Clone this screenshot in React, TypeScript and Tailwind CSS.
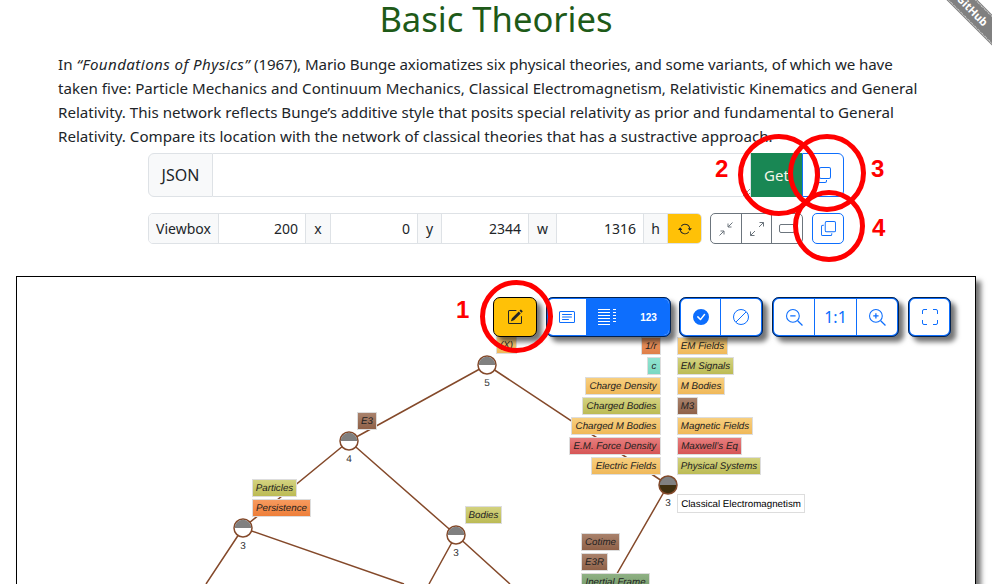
import React from "react";

const tagBg: Record<string, string> = {
  y: "bg-[linear-gradient(#d3d27f,#bcbb55)]",
  o: "bg-[linear-gradient(#f8cf7f,#f0b859)]",
  b: "bg-[linear-gradient(#a9826c,#8f6148)]",
  r: "bg-[linear-gradient(#e77e7e,#d65656)]",
  d: "bg-[linear-gradient(#f79a5e,#ee7f3a)]",
  t: "bg-[linear-gradient(#90e3d0,#7bd8c2)]",
  c: "bg-[linear-gradient(#ee9a66,#df7f48)]",
  g: "bg-[linear-gradient(#8fb184,#739a68)]",
};

const tags: [string, number, number, number, string][] = [
  ["(X)", 496, 336, 21, "o"],
  ["1/r", 641, 337, 20, "c"],
  ["c", 647, 357, 14, "t"],
  ["EM Fields", 677, 337, 51, "o"],
  ["EM Signals", 677, 357, 57, "y"],
  ["Charge Density", 585, 377, 76, "o"],
  ["M Bodies", 677, 377, 48, "o"],
  ["Charged Bodies", 582, 397, 79, "y"],
  ["M3", 677, 397, 21, "b"],
  ["Charged M Bodies", 571, 417, 90, "o"],
  ["Magnetic Fields", 677, 417, 76, "o"],
  ["E.M. Force Density", 569, 437, 92, "r"],
  ["Maxwell’s Eq", 677, 437, 65, "r"],
  ["Electric Fields", 591, 457, 70, "o"],
  ["Physical Systems", 677, 457, 84, "y"],
  ["Cotime", 581, 533, 39, "b"],
  ["E3R", 581, 553, 27, "b"],
  ["Inertial Frame", 581, 573, 69, "g"],
  ["E3", 357, 412, 20, "b"],
  ["Particles", 252, 479, 45, "y"],
  ["Persistence", 252, 499, 59, "d"],
  ["Bodies", 465, 506, 37, "y"],
];

const Node = ({ cx, cy, n, dark }: { cx: number; cy: number; n?: string; dark?: boolean }) => (
  <g>
    <circle cx={cx} cy={cy} r="9" fill={dark ? "#3f2f0f" : "#fff"} stroke="#84492a" strokeWidth="1.5" />
    <path d={`M${cx - 8.3} ${cy}A8.3 8.3 0 0 1 ${cx + 8.3} ${cy}Z`} fill="#808080" />
    {n && (
      <text x={cx} y={cy + 21} textAnchor="middle" fontSize="10" fill="#333" fontFamily="Liberation Sans, sans-serif" textRendering="geometricPrecision">
        {n}
      </text>
    )}
  </g>
);

const Graph = () => (
  <svg className="absolute left-0 top-0" width="992" height="584" viewBox="0 0 992 584">
    <g stroke="#84492a" strokeWidth="1.5" fill="none">
      <path d="M487 365 349 441M349 441 243 528M349 441 456 535M487 365 668 485M668 485 611 584M243 528 206 584M243 528 404 584M456 535 429 584M456 535 510 584" />
    </g>
    <Node cx={487} cy={365} n="5" />
    <Node cx={349} cy={441} n="4" />
    <Node cx={243} cy={528} n="3" />
    <Node cx={456} cy={535} n="3" />
    <Node cx={668} cy={485} n="3" dark />
  </svg>
);

const Ring = ({ x, y, size }: { x: number; y: number; size: number }) => (
  <div
    className="absolute rounded-full border-[5px] border-[#ff0000] z-30 pointer-events-none"
    style={{ left: x, top: y, width: size, height: size }}
  />
);

const Num = ({ x, y, t }: { x: number; y: number; t: string }) => (
  <div
    className="absolute z-30 text-[24px] leading-none font-bold text-[#ff0000] font-['Liberation_Sans',sans-serif]"
    style={{ left: x, top: y }}
  >
    {t}
  </div>
);

const CopyIcon = ({ s = 16 }: { s?: number }) => (
  <svg width={s} height={s} viewBox="0 0 16 16" fill="currentColor">
    <path d="M4 2a2 2 0 0 1 2-2h8a2 2 0 0 1 2 2v8a2 2 0 0 1-2 2H6a2 2 0 0 1-2-2V2Zm2-1a1 1 0 0 0-1 1v8a1 1 0 0 0 1 1h8a1 1 0 0 0 1-1V2a1 1 0 0 0-1-1H6ZM2 5a1 1 0 0 0-1 1v8a1 1 0 0 0 1 1h8a1 1 0 0 0 1-1v-1h1v1a2 2 0 0 1-2 2H2a2 2 0 0 1-2-2V6a2 2 0 0 1 2-2h1v1H2Z" />
  </svg>
);

const ToolGroup = ({ children, className = "" }: { children: React.ReactNode; className?: string }) => (
  <div className={`flex h-[40px] rounded-[7px] border-2 border-[#0d6efd] outline outline-1 outline-black/70 -outline-offset-1 shadow-[5px_5px_5px_rgba(0,0,0,0.55)] overflow-hidden bg-white text-[#0d6efd] ${className}`}>
    {children}
  </div>
);

const Cell = ({ children, w, line = true, cls = "" }: { children: React.ReactNode; w: string; line?: boolean; cls?: string }) => (
  <div className={`flex items-center justify-center ${w} ${line ? "border-r border-[#0d6efd]" : ""} ${cls}`}>{children}</div>
);

const Addon = ({ t, w }: { t: string; w: string }) => (
  <div className={`flex items-center justify-center ${w} h-full bg-[#f8f9fa] border-r border-[#dee2e6] text-[14px]`}>{t}</div>
);
const Val = ({ t }: { t: string }) => (
  <div className="flex items-center justify-end w-[87px] h-full pr-[7px] border-r border-[#dee2e6] text-[14px]">{t}</div>
);

export default function App() {
  return (
    <div className="relative h-[584px] w-[992px] overflow-hidden bg-white text-[#212529] font-['Noto_Sans',sans-serif]">
      <div className="absolute right-[-39px] top-[-1px] z-20 flex h-[20px] w-[120px] rotate-45 items-center justify-center border-y border-dotted border-white/70 bg-[#808080] pl-[4px] text-[11px] font-bold text-white outline outline-1 outline-[#808080]">
        GitHub
      </div>

      <h1 className="h-[38px] text-center text-[34.6px] leading-[37px] text-[#1e5a18]">Basic Theories</h1>

      <p className="mx-[58px] mt-[14px] w-[876px] text-[15.13px] leading-[24px]">
        In <i className="tracking-[0.42px]">“Foundations of Physics”</i>{" "}
        <span className="tracking-[-0.1px]">(1967), Mario Bunge axiomatizes six physical theories, and some variants, of which we have</span> taken five: Particle Mechanics and Continuum Mechanics, Classical Electromagnetism, Relativistic Kinematics and General Relativity. This network reflects Bunge’s additive style that posits special relativity as prior and fundamental to General Relativity. Compare its location with the network of classical theories that has a sustractive approach.
      </p>

      <div className="ml-[148px] mt-[5px] flex h-[44px] w-[696px]">
        <div className="flex w-[65px] items-center justify-center rounded-l-[6px] border border-[#dee2e6] bg-[#f8f9fa] text-[16px]">JSON</div>
        <div className="relative w-[538px] border-y border-r border-[#dee2e6]">
          <svg className="absolute bottom-0 right-0" width="8" height="8" viewBox="0 0 8 8" stroke="#777" strokeWidth="0.8"><path d="M1 8 8 1M5 8 8 5" /></svg>
        </div>
        <div className="flex w-[51px] items-center justify-center bg-[#198754] text-[15px] text-[#f5f5e8]">Get</div>
        <div className="flex w-[42px] items-center justify-center rounded-r-[6px] border border-[#0d6efd] text-[#0d6efd]">
          <CopyIcon />
        </div>
      </div>

      <div className="ml-[148px] mt-[16px] flex h-[31px]">
        <div className="flex h-full w-[554px] overflow-hidden rounded-[5px] border border-[#dee2e6]">
          <Addon t="Viewbox" w="w-[70px]" />
          <Val t="200" />
          <Addon t="x" w="w-[25px]" />
          <Val t="0" />
          <Addon t="y" w="w-[24px]" />
          <Val t="2344" />
          <Addon t="w" w="w-[28px]" />
          <Val t="1316" />
          <Addon t="h" w="w-[24px]" />
          <div className="flex flex-1 items-center justify-center bg-[#ffc107]">
            <svg width="14" height="14" viewBox="0 0 16 16" fill="#212529"><path d="M11.534 7h3.932a.25.25 0 0 1 .192.41l-1.966 2.36a.25.25 0 0 1-.384 0l-1.966-2.36a.25.25 0 0 1 .192-.41zm-11 2h3.932a.25.25 0 0 0 .192-.41L2.692 6.23a.25.25 0 0 0-.384 0L.342 8.59A.25.25 0 0 0 .534 9z" /><path d="M8 3c-1.552 0-2.94.707-3.857 1.818a.5.5 0 1 1-.771-.636A6.002 6.002 0 0 1 13.917 7H12.9A5.002 5.002 0 0 0 8 3zM3.1 9a5.002 5.002 0 0 0 8.757 2.182.5.5 0 1 1 .771.636A6.002 6.002 0 0 1 2.083 9H3.1z" /></svg>
          </div>
        </div>
        <div className="ml-[8px] flex h-full w-[93px] overflow-hidden rounded-[5px] border border-[#6c757d] text-[#6c757d]">
          <div className="flex flex-1 items-center justify-center border-r border-[#6c757d]">
            <svg width="16" height="16" viewBox="0 0 16 16" fill="none" stroke="currentColor"><path d="M1.5 14.5 6 10M6 13.5V10H2.5M14.5 1.5 10 6M10 2.5V6h3.500" /></svg>
          </div>
          <div className="flex flex-1 items-center justify-center border-r border-[#6c757d]">
            <svg width="16" height="16" viewBox="0 0 16 16" fill="none" stroke="currentColor"><path d="M10 6 14.5 1.5M10.500 1.500H14.500V5.500M6 10 1.500 14.500M1.500 10.500V14.500H5.500" /></svg>
          </div>
          <div className="flex flex-1 items-center justify-center">
            <div className="h-[9px] w-[16px] rounded-[2px] border border-current" />
          </div>
        </div>
        <div className="ml-[9px] flex w-[32px] items-center justify-center rounded-[5px] border border-[#0d6efd] text-[#0d6efd]">
          <CopyIcon s={15} />
        </div>
      </div>

      <div className="absolute left-[16px] top-[276px] h-[320px] w-[960px] border border-black shadow-[5px_5px_5px_rgba(0,0,0,0.55)]" />

      <Graph />

      <div className="absolute left-[677px] top-[494px] flex h-[19px] w-[128px] items-center justify-center border border-[#ddd] bg-white pt-[3px] text-[9.75px] text-black [text-rendering:geometricPrecision] font-['Liberation_Sans',sans-serif]">
        Classical Electromagnetism
      </div>

      {tags.map(([t, x, y, w, c]) => (
        <div
          key={t}
          className={`absolute flex h-[18px] items-center justify-center border border-[#ddd] pt-[3px] text-[9.75px] italic text-[#222] whitespace-nowrap [text-rendering:geometricPrecision] font-['Liberation_Sans',sans-serif] ${tagBg[c]}`}
          style={{ left: x, top: y, width: w }}
        >
          {t}
        </div>
      ))}

      <div className="absolute left-[493px] top-[297px] z-10 flex items-start gap-[9px]">
        <div className="flex h-[40px] w-[44px] items-center justify-center rounded-[7px] border border-black bg-[#ffc107] shadow-[5px_5px_5px_rgba(0,0,0,0.55)]">
          <svg width="16" height="16" viewBox="0 0 16 16" fill="#212529"><path d="M15.502 1.94a.5.5 0 0 1 0 .706L14.459 3.69l-2-2L13.502.646a.5.5 0 0 1 .707 0l1.293 1.293zm-1.750 2.456-2-2L4.939 9.210a.5.5 0 0 0-.121.196l-.805 2.414a.25.25 0 0 0 .316.316l2.414-.805a.5.5 0 0 0 .196-.120l6.813-6.814z" /><path fillRule="evenodd" d="M1 13.500A1.500 1.500 0 0 0 2.500 15h11a1.500 1.500 0 0 0 1.500-1.500v-6a.5.5 0 0 0-1 0v6a.5.500 0 0 1-.5.5h-11a.5.5 0 0 1-.5-.5v-11a.5.5 0 0 1 .5-.5H9a.5.5 0 0 0 0-1H2.500A1.500 1.500 0 0 0 1 2.500v11z" /></svg>
        </div>
        <ToolGroup>
          <Cell w="w-[38px]" line={false}>
            <svg width="16" height="16" viewBox="0 0 16 16" fill="currentColor"><path d="M14.500 3a.5.5 0 0 1 .5.5v9a.5.5 0 0 1-.5.5h-13a.5.5 0 0 1-.5-.5v-9a.5.5 0 0 1 .5-.5h13zm-13-1A1.500 1.500 0 0 0 0 3.500v9A1.500 1.500 0 0 0 1.500 14h13a1.500 1.500 0 0 0 1.500-1.500v-9A1.500 1.500 0 0 0 14.500 2h-13z" /><path d="M3 5.500a.5.5 0 0 1 .5-.5h9a.5.5 0 0 1 0 1h-9a.5.5 0 0 1-.5-.5zM3 8a.5.5 0 0 1 .5-.5h9a.5.5 0 0 1 0 1h-9A.5.5 0 0 1 3 8zm0 2.500a.5.5 0 0 1 .5-.5h6a.5.5 0 0 1 0 1h-6a.5.5 0 0 1-.5-.5z" /></svg>
          </Cell>
          <Cell w="w-[42px]" line={false} cls="bg-[#0d6efd] text-white">
            <svg width="18" height="16" viewBox="0 0 18 16" stroke="currentColor" strokeWidth="1"><path d="M0 .5h12M0 3.500h12M0 6.500h12M0 9.500h12M0 12.500h12M0 15.500h12M15 .5h3M15 3.500h3M15 6.500h3M15 9.500h3M15 12.500h3" /></svg>
          </Cell>
          <Cell w="w-[41px]" line={false} cls="bg-[#0d6efd] text-white text-[10px] font-bold font-['Liberation_Sans',sans-serif]">123</Cell>
        </ToolGroup>
        <ToolGroup className="-ml-[1px]">
          <Cell w="w-[40px]">
            <svg width="16" height="16" viewBox="0 0 16 16" fill="currentColor"><path d="M16 8A8 8 0 1 1 0 8a8 8 0 0 1 16 0zm-3.970-3.030a.75.75 0 0 0-1.080.022L7.477 9.417 5.384 7.323a.75.75 0 0 0-1.060 1.060L6.970 11.030a.75.75 0 0 0 1.079-.020l3.992-4.990a.75.75 0 0 0-.010-1.050z" /></svg>
          </Cell>
          <Cell w="w-[40px]" line={false}>
            <svg width="16" height="16" viewBox="0 0 16 16" fill="none" stroke="currentColor"><circle cx="8" cy="8" r="7.500" /><path d="M3 13 13 3" /></svg>
          </Cell>
        </ToolGroup>
        <ToolGroup>
          <Cell w="w-[41px]">
            <svg width="17" height="17" viewBox="0 0 16 16" fill="none" stroke="currentColor"><circle cx="6.500" cy="6.500" r="6" /><path d="M11 11l4.500 4.500M4 6.500h5" strokeWidth="1.200" /></svg>
          </Cell>
          <Cell w="w-[42px]" cls="text-[16px]">1:1</Cell>
          <Cell w="w-[40px]" line={false}>
            <svg width="17" height="17" viewBox="0 0 16 16" fill="none" stroke="currentColor"><circle cx="6.500" cy="6.500" r="6" /><path d="M11 11l4.500 4.500M4 6.500h5M6.500 4v5" strokeWidth="1.200" /></svg>
          </Cell>
        </ToolGroup>
        <ToolGroup>
          <Cell w="w-[39px]" line={false}>
            <svg width="16" height="16" viewBox="0 0 16 16" fill="none" stroke="currentColor"><path d="M.5 5V2A1.500 1.500 0 0 1 2 .5h3M11 .5h3A1.500 1.500 0 0 1 15.500 2v3M15.500 11v3a1.500 1.500 0 0 1-1.500 1.500h-3M5 15.500H2A1.500 1.500 0 0 1 .5 14v-3" /></svg>
          </Cell>
        </ToolGroup>
      </div>

      <Ring x={480} y={280} size={73} />
      <Ring x={738} y={134} size={82} />
      <Ring x={788} y={134} size={78} />
      <Ring x={793} y={190} size={72} />
      <Num x={456} y={298} t="1" />
      <Num x={715} y={157} t="2" />
      <Num x={871} y={157} t="3" />
      <Num x={872} y={216} t="4" />
    </div>
  );
}
